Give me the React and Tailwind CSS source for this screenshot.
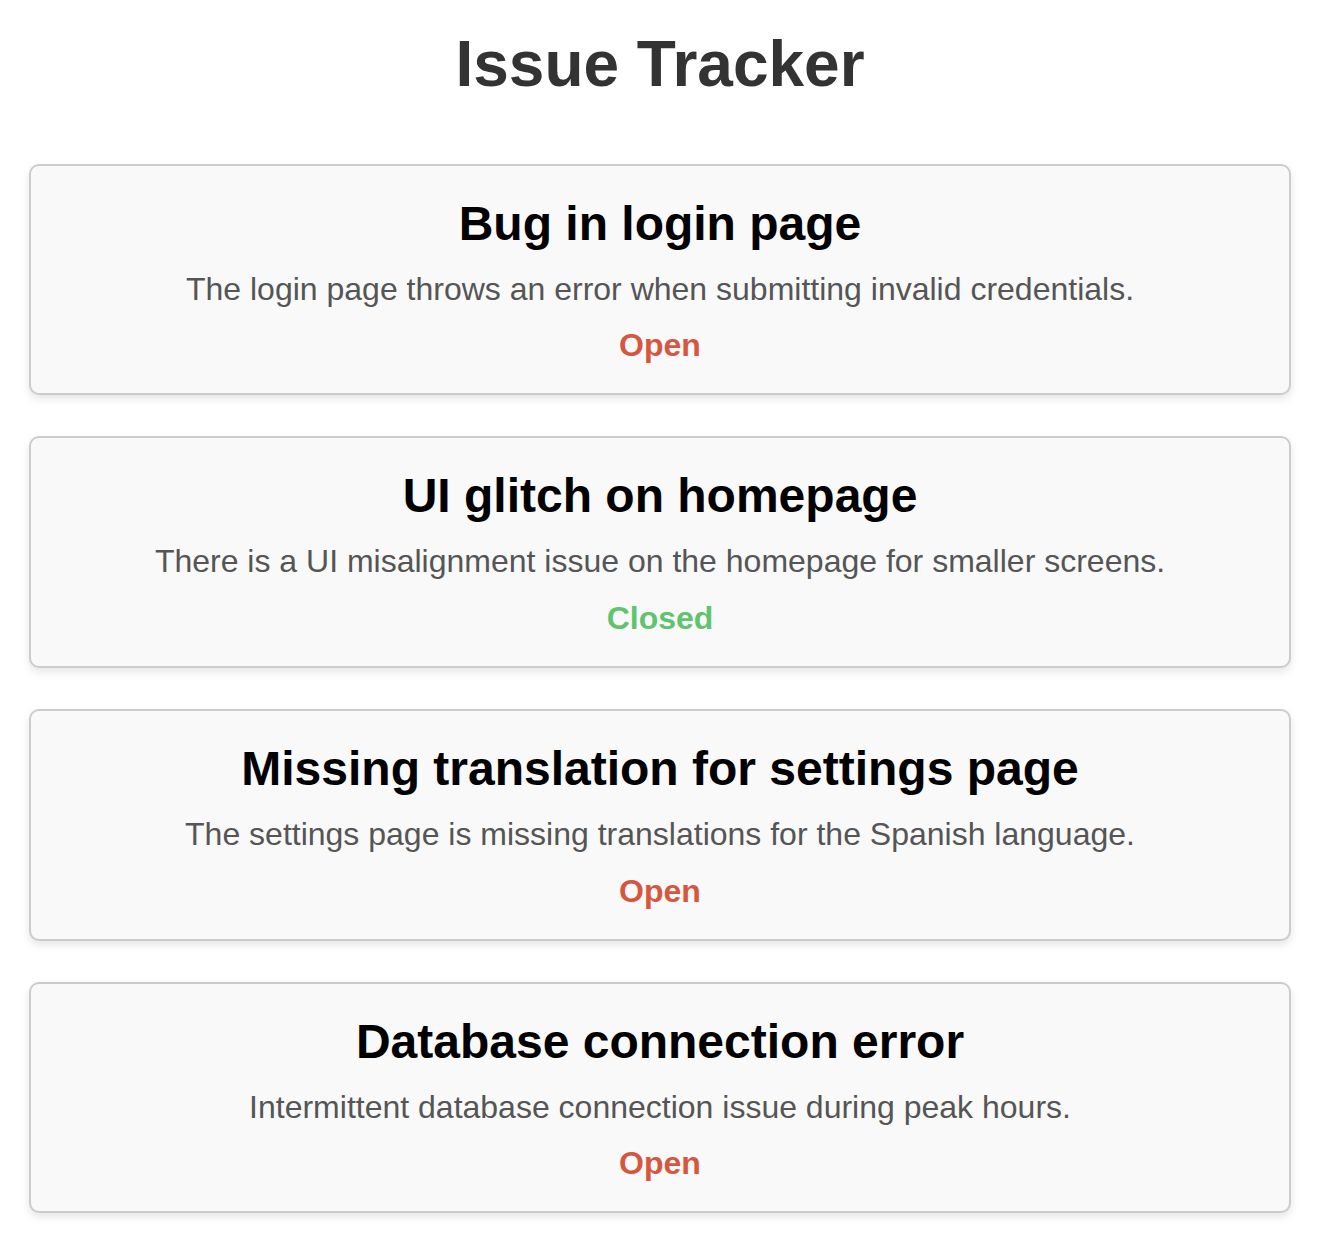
import React from 'react';

const issues = [
  {
    title: 'Bug in login page',
    description: 'The login page throws an error when submitting invalid credentials.',
    status: 'Open',
  },
  {
    title: 'UI glitch on homepage',
    description: 'There is a UI misalignment issue on the homepage for smaller screens.',
    status: 'Closed',
  },
  {
    title: 'Missing translation for settings page',
    description: 'The settings page is missing translations for the Spanish language.',
    status: 'Open',
  },
  {
    title: 'Database connection error',
    description: 'Intermittent database connection issue during peak hours.',
    status: 'Open',
  },
];

function IssueCard({ issue }) {
  const isOpen = issue.status === 'Open';

  return (
    <div className="flex flex-col items-center gap-[20px] rounded-[10px] border-2 border-[#cccccc] bg-[#f9f9f9] pt-[30px] pb-[29px] text-center shadow-[0_4px_8px_rgba(0,0,0,0.1)]">
      <h2 className="text-[48px] font-bold leading-[1.149] text-black">{issue.title}</h2>
      <p className="text-[32px] leading-[1.149] text-[#555555]">{issue.description}</p>
      <span
        className={
          'text-[32px] font-bold leading-[1.149] ' +
          (isOpen ? 'text-[#d5573f]' : 'text-[#60c46e]')
        }
      >
        {issue.status}
      </span>
    </div>
  );
}

export default function App() {
  return (
    <div className="min-h-screen bg-white pt-[28px] pb-[38px] pl-[29px] pr-[37px] font-['Liberation_Sans',Arial,sans-serif]">
      <h1 className="text-center text-[64px] font-bold leading-[1.149] text-[#333333]">
        Issue Tracker
      </h1>

      <div className="mt-[62px] flex flex-col gap-[41px]">
        {issues.map((issue) => (
          <IssueCard key={issue.title} issue={issue} />
        ))}
      </div>
    </div>
  );
}
